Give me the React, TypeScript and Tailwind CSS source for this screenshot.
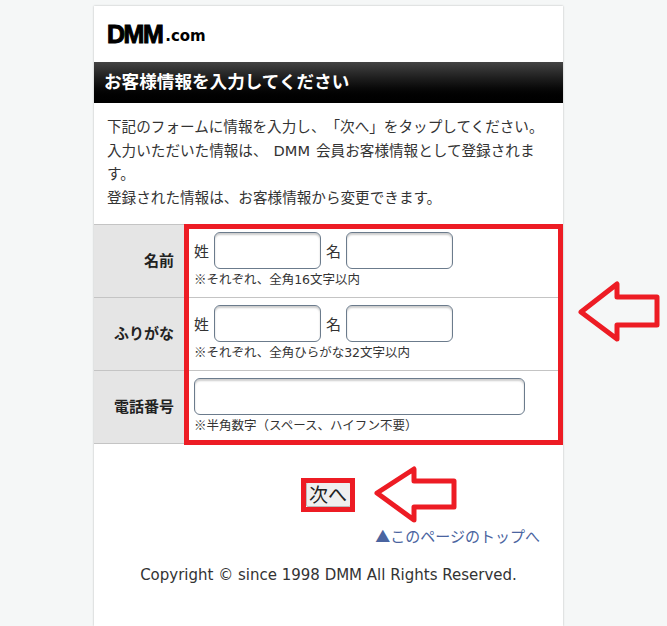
import React from "react";

const fontStack = "font-['DejaVu_Sans','Noto_Sans_CJK_JP',sans-serif] [text-spacing-trim:space-all]";
const cjkOnly = "font-['Noto_Sans_CJK_JP',sans-serif]";

const Arrow: React.FC<{ className: string; d: string; w: number; h: number }> = ({ className, d, w, h }) => (
  <svg className={className} width={w} height={h} viewBox={`0 0 ${w} ${h}`} fill="none">
    <path d={d} stroke="#ed1c24" strokeWidth="5" strokeLinejoin="round" fill="none" />
  </svg>
);

const TextBox: React.FC<{ width: string }> = ({ width }) => (
  <input
    type="text"
    className={`h-[37px] ${width} rounded-[6px] border border-[#6b7b8c] bg-white shadow-[inset_0_2px_2px_rgba(0,0,0,0.2)]`}
  />
);

const FormRow: React.FC<{ label: string; children: React.ReactNode }> = ({ label, children }) => (
  <div className="flex h-[73px] border-b border-[#c4c4c4]">
    <div className="flex w-[91px] shrink-0 items-center justify-end bg-[#e5e5e5] pr-[11px] text-[15px] font-bold text-[#222]">
      {label}
    </div>
    <div className="flex-1 pl-[9px] pt-[7px]">{children}</div>
  </div>
);

const NameInputs: React.FC = () => (
  <div className="flex items-center text-[15px] text-[#333]">
    <span className="w-[20px] pt-[3px]">姓</span>
    <TextBox width="w-[107px]" />
    <span className="ml-[5px] w-[20px] pt-[3px]">名</span>
    <TextBox width="w-[107px]" />
  </div>
);

const Note: React.FC<{ children: React.ReactNode }> = ({ children }) => (
  <p className="text-[12.5px] leading-[20px] text-[#333]">
    <span className={cjkOnly}>※</span>
    {children}
  </p>
);

export default function App() {
  return (
    <div className={`h-[626px] w-[667px] overflow-hidden bg-[#f5f7f7] ${fontStack}`}>
      <div className="relative ml-[94px] mt-[6px] h-[620px] w-[469px] bg-white shadow-[0_0_2px_rgba(0,0,0,0.25)]">
        <header className="flex h-[56px] items-center pl-[13px] pt-[1px]">
          <span className="font-['Liberation_Sans',sans-serif] text-[25px] font-bold leading-none tracking-[-1.5px] text-black [-webkit-text-stroke:1px_black]">
            DMM
          </span>
          <span className="ml-[3px] mt-[4px] font-['DejaVu_Sans',sans-serif] text-[15px] font-bold leading-none text-black">
            .com
          </span>
        </header>

        <h1 className="flex h-[41px] items-center bg-gradient-to-b from-[#444444] to-[#000000] pl-[10px] text-[17.6px] font-bold text-white">
          お客様情報を入力してください
        </h1>

        <div className="h-[122px] border-b border-[#c4c4c4] px-[13px] pt-[12px] text-[14.6px] leading-[23.7px] text-[#333] [word-spacing:1.4px]">
          <p>下記のフォームに情報を入力し、「次へ」をタップしてください。</p>
          <p>入力いただいた情報は、 DMM 会員お客様情報として登録されます。</p>
          <p>登録された情報は、お客様情報から変更できます。</p>
        </div>

        <FormRow label="名前">
          <NameInputs />
          <Note>それぞれ、全角16文字以内</Note>
        </FormRow>
        <FormRow label="ふりがな">
          <NameInputs />
          <Note>それぞれ、全角ひらがな32文字以内</Note>
        </FormRow>
        <FormRow label="電話番号">
          <TextBox width="w-[331px]" />
          <Note>半角数字（スペース、ハイフン不要）</Note>
        </FormRow>

        <div className="mt-[38px] flex justify-center pr-[1px]">
          <button className="h-[25px] w-[45px] rounded-[2px] border border-[#bbb] bg-[#efefef] pt-[2px] text-[19px] leading-none text-[#222]">
            次へ
          </button>
        </div>

        <p className="mt-[19px] pr-[23px] text-right text-[15px] leading-[20px] text-[#4a64a0]">
          <span className={cjkOnly}>▲</span>このページのトップへ
        </p>
        <p className="mt-[18px] text-center text-[15px] leading-[20px] text-[#333]">
          Copyright © since 1998 DMM All Rights Reserved.
        </p>

        {/* 赤い注釈 */}
        <div className="absolute left-[90px] top-[218px] h-[221px] w-[379px] border-[5px] border-[#ed1c24]" />
        <div className="absolute left-[207px] top-[472px] h-[34px] w-[54px] border-[5px] border-[#ed1c24]" />
      </div>
      <Arrow
        className="absolute left-[576px] top-[278px]"
        w={86}
        h={68}
        d="M5 34 L41 6 L41 19 L81 19 L81 47 L41 47 L41 61 Z"
      />
      <Arrow
        className="absolute left-[370px] top-[462px]"
        w={90}
        h={64}
        d="M7 31 L44 7 L44 19 L84 19 L84 45 L44 45 L44 58 Z"
      />
    </div>
  );
}
